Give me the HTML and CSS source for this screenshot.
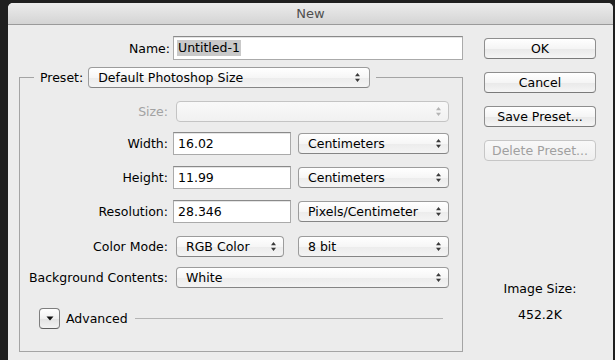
FILE: index.html
```html
<!DOCTYPE html>
<html>
<head>
<meta charset="utf-8">
<title>New</title>
<link rel="stylesheet" href="styles.css">
</head>
<body>
<div class="window">
  <div class="titlebar">New</div>
  <div class="body">
    <div class="main">
      <div class="row name-row">
        <span class="lbl name-lbl">Name:</span>
        <div class="field name-field"><span class="sel">Untitled-1</span></div>
      </div>
      <fieldset class="group">
        <legend class="legend">
          <span class="legend-lbl">Preset:</span>
          <span class="popup preset-popup"><span>Default Photoshop Size</span><svg class="arrows" width="5" height="9" viewBox="0 0 5 9"><path d="M2.5 0L5 3.3H0Z M2.5 9L5 5.7H0Z" fill="#3a3a3a"/></svg></span>
        </legend>
        <div class="row size-row">
          <span class="lbl disabled">Size:</span>
          <span class="popup wide is-disabled"><span></span><svg class="arrows" width="5" height="9" viewBox="0 0 5 9"><path d="M2.5 0L5 3.3H0Z M2.5 9L5 5.7H0Z" fill="#b4b4b4"/></svg></span>
        </div>
        <div class="row width-row">
          <span class="lbl">Width:</span>
          <div class="field num-field">16.02</div>
          <span class="popup unit-popup"><span>Centimeters</span><svg class="arrows" width="5" height="9" viewBox="0 0 5 9"><path d="M2.5 0L5 3.3H0Z M2.5 9L5 5.7H0Z" fill="#3a3a3a"/></svg></span>
        </div>
        <div class="row mid-row">
          <span class="lbl">Height:</span>
          <div class="field num-field">11.99</div>
          <span class="popup unit-popup"><span>Centimeters</span><svg class="arrows" width="5" height="9" viewBox="0 0 5 9"><path d="M2.5 0L5 3.3H0Z M2.5 9L5 5.7H0Z" fill="#3a3a3a"/></svg></span>
        </div>
        <div class="row mid-row">
          <span class="lbl">Resolution:</span>
          <div class="field num-field">28.346</div>
          <span class="popup unit-popup"><span>Pixels/Centimeter</span><svg class="arrows" width="5" height="9" viewBox="0 0 5 9"><path d="M2.5 0L5 3.3H0Z M2.5 9L5 5.7H0Z" fill="#3a3a3a"/></svg></span>
        </div>
        <div class="row mode-row">
          <span class="lbl">Color Mode:</span>
          <span class="popup mode-popup"><span>RGB Color</span><svg class="arrows" width="5" height="9" viewBox="0 0 5 9"><path d="M2.5 0L5 3.3H0Z M2.5 9L5 5.7H0Z" fill="#3a3a3a"/></svg></span>
          <span class="popup bit-popup"><span>8 bit</span><svg class="arrows" width="5" height="9" viewBox="0 0 5 9"><path d="M2.5 0L5 3.3H0Z M2.5 9L5 5.7H0Z" fill="#3a3a3a"/></svg></span>
        </div>
        <div class="row bg-row">
          <span class="lbl">Background Contents:</span>
          <span class="popup wide"><span>White</span><svg class="arrows" width="5" height="9" viewBox="0 0 5 9"><path d="M2.5 0L5 3.3H0Z M2.5 9L5 5.7H0Z" fill="#3a3a3a"/></svg></span>
        </div>
        <div class="adv-row">
          <span class="disclosure"><svg width="8" height="5" viewBox="0 0 8 5"><path d="M0.5 0.5H7.5L4 4.5Z" fill="#111"/></svg></span>
          <span class="adv-lbl">Advanced</span>
          <span class="adv-line"></span>
        </div>
      </fieldset>
    </div>
    <div class="side">
      <button class="btn">OK</button>
      <button class="btn">Cancel</button>
      <button class="btn">Save Preset...</button>
      <button class="btn btn-disabled">Delete Preset...</button>
      <div class="info">Image Size:</div>
      <div class="info info-val">452.2K</div>
    </div>
  </div>
</div>
</body>
</html>
```

FILE: styles.css
```css
html, body {
  margin: 0;
  padding: 0;
  background: #1f1f1f;
}
body {
  font-family: "DejaVu Sans", "Liberation Sans", sans-serif;
  font-size: 12.5px;
  color: #000;
}
.window {
  margin: 3px 2px 0 8px;
  height: 357px;
  background: #ececec;
  border-radius: 5px 5px 0 0;
  overflow: hidden;
  display: flex;
  flex-direction: column;
}
.titlebar {
  flex: none;
  height: 21px;
  line-height: 21px;
  text-align: center;
  font-size: 13px;
  color: #4f4f4f;
  background: linear-gradient(#ececec, #d4d4d4);
  border-bottom: 1px solid #9a9a9a;
}
.body {
  display: flex;
}
.main {
  flex: none;
  width: 455px;
  box-sizing: border-box;
  padding: 11px 0 0 11px;
}
.side {
  flex: none;
  width: 112px;
  margin-left: 21px;
  padding-top: 13px;
  display: flex;
  flex-direction: column;
}
.row {
  display: flex;
  align-items: center;
  height: 23px;
}
.lbl {
  flex: none;
  width: 148px;
  margin-right: 5px;
  text-align: right;
  white-space: nowrap;
}
.name-row {
  height: 24px;
}
.name-lbl {
  width: 151px;
  margin-right: 3px;
}
.disabled {
  color: #a2a2a2;
}
.field {
  flex: none;
  box-sizing: border-box;
  height: 23px;
  background: #fff;
  border: 1px solid #aaaaaa;
  border-top-color: #8a8a8a;
  box-shadow: inset 0 1px 0 #e4e4e4;
  padding-left: 4px;
  display: flex;
  align-items: center;
}
.name-field {
  width: 290px;
  height: 24px;
  padding-left: 3px;
}
.sel {
  background: #c9c9c9;
  line-height: 16px;
  padding: 0 1px;
}
.num-field {
  width: 118px;
}
.group {
  margin: 7px 0 0 0;
  padding: 0 0 22px 0;
  width: 444px;
  box-sizing: border-box;
  min-width: 0;
  border: 1px solid #a4a4a4;
}
.legend {
  display: flex;
  align-items: center;
  margin-left: 14px;
  padding: 0 6px;
}
.legend-lbl {
  margin-right: 5px;
}
.popup {
  flex: none;
  box-sizing: border-box;
  height: 21px;
  margin-left: 3px;
  padding: 0 7px 0 9px;
  display: flex;
  align-items: center;
  justify-content: space-between;
  border: 1px solid #9c9c9c;
  border-bottom-color: #858585;
  border-radius: 4px;
  background: linear-gradient(#ffffff, #f6f6f6 50%, #ececec 52%, #f4f4f4);
  white-space: nowrap;
}
.preset-popup {
  margin-left: 0;
  width: 282px;
  padding-right: 9px;
}
.is-disabled {
  border-color: #c4c4c4;
  background: linear-gradient(#f9f9f9, #f1f1f1);
}
.wide {
  width: 273px;
}
.unit-popup {
  width: 151px;
  margin-left: 7px;
}
.mode-popup {
  width: 108px;
}
.bit-popup {
  width: 151px;
  margin-left: 14px;
}
.arrows {
  flex: none;
}
.size-row {
  margin-top: 12px;
}
.width-row {
  margin-top: 9px;
}
.mid-row {
  margin-top: 11px;
}
.mode-row {
  margin-top: 12px;
}
.bg-row {
  margin-top: 8px;
}
.adv-row {
  display: flex;
  align-items: center;
  height: 21px;
  margin-top: 19px;
  padding-left: 19px;
}
.disclosure {
  flex: none;
  box-sizing: border-box;
  width: 21px;
  height: 21px;
  border: 1px solid #7e7e7e;
  border-bottom-color: #5e5e5e;
  border-radius: 4px;
  background: linear-gradient(#ffffff, #f0f0f0 50%, #e2e2e2 52%, #f2f2f2);
  display: flex;
  align-items: center;
  justify-content: center;
}
.adv-lbl {
  margin-left: 6px;
}
.adv-line {
  flex: 1;
  height: 1px;
  background: #b4b4b4;
  margin: 0 19px 0 7px;
}
.btn {
  height: 21px;
  margin: 0 0 13px 0;
  padding: 0;
  box-sizing: border-box;
  font: inherit;
  color: #000;
  border: 1px solid #8e8e8e;
  border-bottom-color: #7a7a7a;
  border-radius: 4px;
  background: linear-gradient(#ffffff, #f5f5f5 50%, #e9e9e9 52%, #f5f5f5);
}
.btn-disabled {
  color: #a0a0a0;
  border-color: #c6c6c6;
  background: linear-gradient(#f8f8f8, #efefef);
}
.info {
  text-align: center;
  line-height: 16px;
  margin-top: 107px;
}
.info-val {
  margin-top: 10px;
}
```
